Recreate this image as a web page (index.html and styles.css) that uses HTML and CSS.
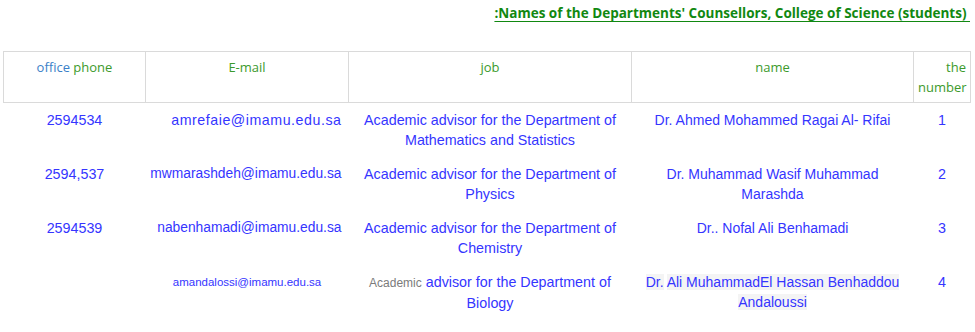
FILE: index.html
```html
<!DOCTYPE html>
<html lang="en">
<head>
    <meta charset="UTF-8">
    <title>College of Science - Departments' Counsellors</title>
    <link rel="stylesheet" href="styles.css">
</head>
<body>
    <div class="page">
        <h2 class="title"><u>:Names of the Departments' Counsellors, College of Science (students)&nbsp;</u></h2>

        <table class="counsellors">
            <colgroup>
                <col class="c-phone">
                <col class="c-mail">
                <col class="c-job">
                <col class="c-name">
                <col class="c-num">
            </colgroup>
            <thead>
                <tr>
                    <th><span class="blue-head">office</span> phone</th>
                    <th>E-mail</th>
                    <th>job</th>
                    <th>name</th>
                    <th class="num-head">the number</th>
                </tr>
            </thead>
            <tbody>
                <tr>
                    <td>2594534</td>
                    <td class="mail wide">amrefaie@imamu.edu.sa</td>
                    <td>Academic advisor for the Department of Mathematics and Statistics</td>
                    <td class="person">Dr. Ahmed Mohammed Ragai Al- Rifai</td>
                    <td>1</td>
                </tr>
                <tr>
                    <td>2594,537</td>
                    <td class="mail">mwmarashdeh@imamu.edu.sa</td>
                    <td>Academic advisor for the Department of Physics</td>
                    <td class="person">Dr. Muhammad Wasif Muhammad Marashda</td>
                    <td>2</td>
                </tr>
                <tr>
                    <td>2594539</td>
                    <td class="mail">nabenhamadi@imamu.edu.sa</td>
                    <td>Academic advisor for the Department of Chemistry</td>
                    <td class="person">Dr.. Nofal Ali Benhamadi</td>
                    <td>3</td>
                </tr>
                <tr>
                    <td></td>
                    <td class="small-mail">amandalossi@imamu.edu.sa</td>
                    <td><span class="grey-word">Academic</span> advisor for the Department of Biology</td>
                    <td class="person"><span class="pasted">Dr.</span> <span class="pasted">Ali MuhammadEl Hassan Benhaddou Andaloussi</span></td>
                    <td>4</td>
                </tr>
            </tbody>
        </table>
    </div>
</body>
</html>
```

FILE: styles.css
```css
* {
    box-sizing: border-box;
    margin: 0;
    padding: 0;
}
body {
    background-color: #fff;
    font-family: 'Liberation Sans', Arial, sans-serif;
}
.page {
    padding: 3px 5px 0 3px;
}
.title {
    text-align: right;
    font-family: 'Open Sans', 'Noto Sans', sans-serif;
    font-size: 13.5px;
    font-weight: 700;
    line-height: 20px;
    color: #118811;
    margin-bottom: 28px;
}
.title u {
    text-decoration-thickness: 1px;
    text-underline-offset: 3px;
}
.counsellors {
    width: 100%;
    border-collapse: collapse;
    table-layout: fixed;
}
.c-phone { width: 142px; }
.c-mail { width: 203px; }
.c-job { width: 283px; }
.c-name { width: 282px; }
.c-num { width: 57px; }
.counsellors th {
    border: 1px solid #dadada;
    font-family: 'Open Sans', 'Noto Sans', sans-serif;
    font-size: 13px;
    font-weight: 400;
    line-height: 20px;
    color: #3c9a2c;
    text-align: center;
    vertical-align: top;
    padding: 5px 4px 5px;
    height: 51px;
}
.counsellors th.num-head {
    text-align: right;
    padding-right: 4px;
}
.blue-head {
    color: #3b7fc8;
}
.counsellors td {
    font-size: 14.3px;
    line-height: 20px;
    color: #3535ff;
    text-align: center;
    vertical-align: top;
    padding: 7px 4px 7px;
    height: 54px;
}
.counsellors td.person {
    font-size: 14px;
}
.counsellors td.mail {
    font-size: 13.8px;
    text-align: right;
    padding-right: 7px;
    white-space: nowrap;
}
.counsellors td.mail.wide {
    font-size: 14.2px;
    letter-spacing: 0.55px;
}
.counsellors td.small-mail {
    font-size: 11.5px;
}
.grey-word {
    font-size: 12px;
    color: #7b7b7b;
}
.pasted {
    background-color: #f4f4f4;
}
```
